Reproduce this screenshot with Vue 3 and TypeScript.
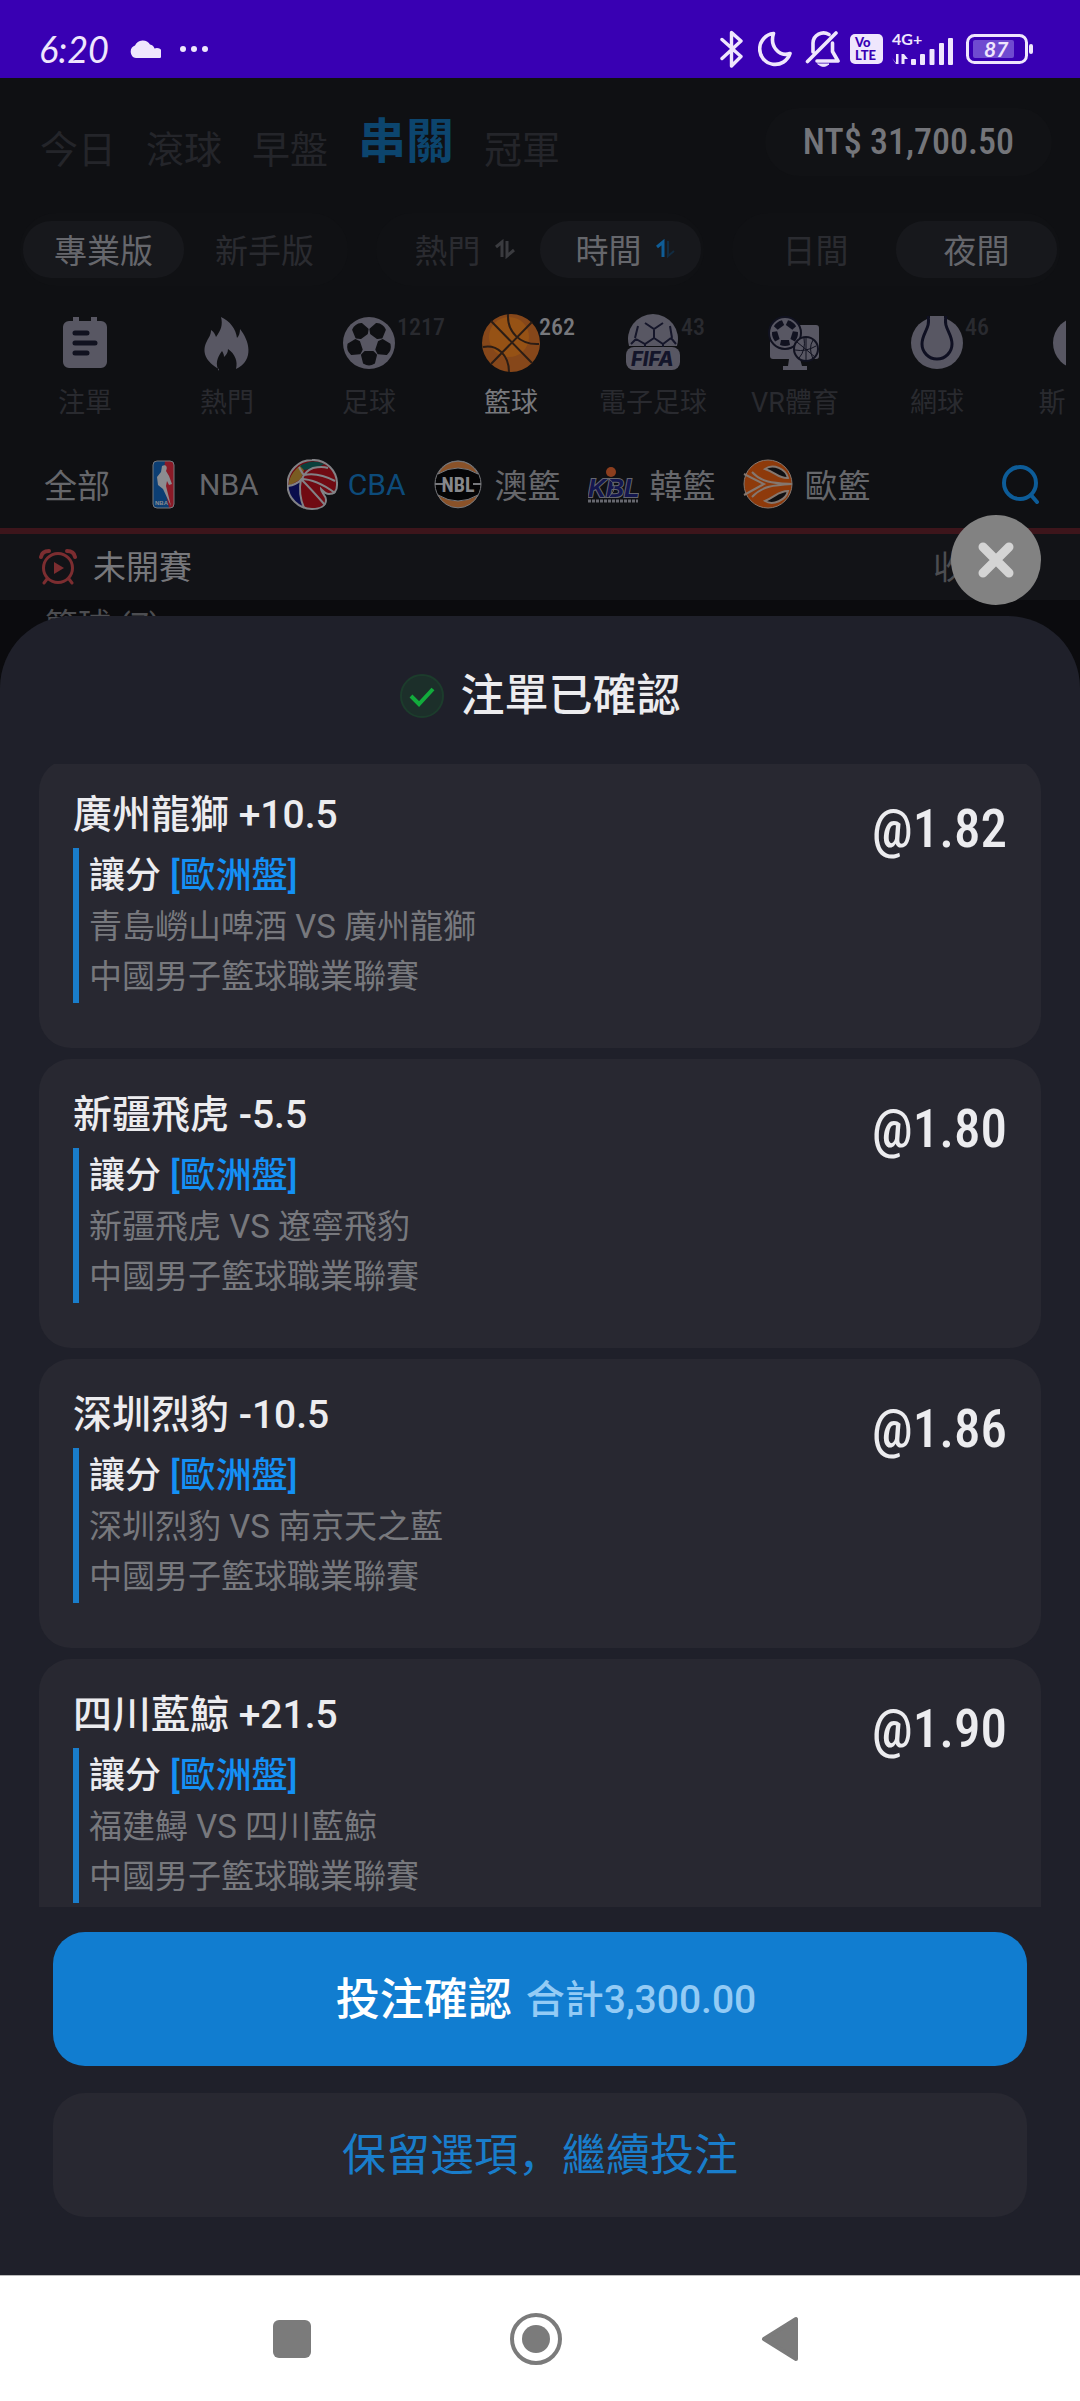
<script setup lang="ts">
import { ref } from 'vue'

interface Sport {
  id: string
  label: string
  count?: number
}

interface League {
  id: string
  label: string
  latin?: boolean
}

interface Bet {
  pick: string
  match: string
  odds: string
}

const tabs = ['今日', '滾球', '早盤', '串關', '冠軍']
const activeTab = ref('串關')

const sports: Sport[] = [
  { id: 'slip', label: '注單' },
  { id: 'hot', label: '熱門' },
  { id: 'soccer', label: '足球', count: 1217 },
  { id: 'basketball', label: '籃球', count: 262 },
  { id: 'fifa', label: '電子足球', count: 43 },
  { id: 'vr', label: 'VR體育' },
  { id: 'tennis', label: '網球', count: 46 },
  { id: 'snooker', label: '斯諾克' },
]
const activeSport = ref('basketball')

const leagues: League[] = [
  { id: 'nba', label: 'NBA', latin: true },
  { id: 'cba', label: 'CBA', latin: true },
  { id: 'nbl', label: '澳籃' },
  { id: 'kbl', label: '韓籃' },
  { id: 'euro', label: '歐籃' },
]
const activeLeague = ref('cba')

const bets: Bet[] = [
  { pick: '廣州龍獅 +10.5', match: '青島嶗山啤酒 VS 廣州龍獅', odds: '@1.82' },
  { pick: '新疆飛虎 -5.5', match: '新疆飛虎 VS 遼寧飛豹', odds: '@1.80' },
  { pick: '深圳烈豹 -10.5', match: '深圳烈豹 VS 南京天之藍', odds: '@1.86' },
  { pick: '四川藍鯨 +21.5', match: '福建鱘 VS 四川藍鯨', odds: '@1.90' },
]

const patchAngles = [0, 72, 144, 216, 288]
</script>

<template>
  <div class="app">
    <header class="status">
      <span class="clock">6:20</span>
      <svg class="cloud" width="32" height="20" viewBox="0 0 32 20"><path d="M7 19a6.500 6.500 0 0 1-1-12.500A8.500 8.500 0 0 1 21 5.500a6 6 0 0 1 4.500 4A5.500 5.500 0 0 1 31 19z" fill="#efe6fd" /></svg>
      <svg width="30" height="8" viewBox="0 0 30 8" fill="#efe6fd"><circle cx="4" cy="4" r="3" /><circle cx="15" cy="4" r="3" /><circle cx="26" cy="4" r="3" /></svg>
      <div class="status-right">
        <svg width="24" height="38" viewBox="0 0 24 38" fill="none" stroke="#efe6fd" stroke-width="3.400" stroke-linejoin="round" stroke-linecap="round"><path d="M2 9.500l19 17-9.500 9.500V2.500L21 11 2 28.500" /></svg>
        <svg class="moon" width="34" height="36" viewBox="0 0 34 36" fill="none" stroke="#efe6fd" stroke-width="3.600" stroke-linejoin="round"><path d="M15.500 2.500A15.500 15.500 0 1 0 32 22.500C21 26.500 11.500 15 15.500 2.500z" /></svg>
        <svg class="bell" width="36" height="38" viewBox="0 0 36 38" fill="none" stroke="#efe6fd" stroke-width="3.600" stroke-linecap="round" stroke-linejoin="round"><path d="M24 4.500A10.500 10.500 0 0 0 8 13v9M27.500 13v8.500L33 31H12M2.500 31.500L31 3" /><path d="M13 34h11q-5.500 5-11 0z" fill="#efe6fd" stroke-width="1" /></svg>
        <svg class="volte" width="33" height="30" viewBox="0 0 33 30"><rect width="33" height="30" rx="5" fill="#efe6fd" /><text x="5" y="13" font-family="Lato, sans-serif" font-weight="900" font-size="13" fill="#3a00b3">Vo</text><text x="5" y="26" font-family="Lato, sans-serif" font-weight="900" font-size="13" fill="#3a00b3">LTE</text></svg>
        <svg class="net" width="64" height="42" viewBox="0 -4 64 42" fill="#efe6fd">
          <text x="1" y="13" font-family="Lato, sans-serif" font-weight="700" font-size="16">4G+</text>
          <path d="M1 26l4 5V22h2.500v10H5zM10.500 22H13l4 5h-3.500v5h-3z" />
          <rect x="20" y="27" width="5" height="6" rx="1" /><rect x="29" y="22" width="5" height="11" rx="1" /><rect x="38.500" y="17" width="5" height="16" rx="1" /><rect x="48" y="11" width="5" height="22" rx="1" /><rect x="57" y="6" width="5" height="27" rx="1" />
        </svg>
        <svg class="battery" width="68" height="30" viewBox="0 0 68 30"><rect x="1.500" y="1.500" width="59" height="27" rx="7" fill="none" stroke="#efe6fd" stroke-width="3" /><rect x="7" y="6" width="41" height="18" rx="2" fill="#6f4bd0" /><rect x="63" y="10" width="4" height="10" rx="2" fill="#efe6fd" /><text x="18" y="23" font-family="Lato, sans-serif" font-style="italic" font-weight="700" font-size="21" fill="#efe6fd">87</text></svg>
      </div>
    </header>

    <div class="stage">
      <main class="sportsbook">
        <div class="top">
          <nav class="tabs">
            <a v-for="t in tabs" :key="t" href="#" :class="{ on: t === activeTab }" @click.prevent="activeTab = t">{{ t }}</a>
          </nav>
          <span class="balance">NT$ 31,700.50</span>
        </div>

        <div class="modes">
          <div class="group"><button class="on">專業版</button><button>新手版</button></div>
          <div class="group sort">
            <button>熱門<svg width="20" height="20" viewBox="0 0 20 20" fill="none" stroke="#3a3b3f" stroke-width="3"><path d="M1 8l6-5v15M12 2v15l7-6" /></svg></button>
            <button class="on">時間<svg width="20" height="20" viewBox="0 0 20 20" fill="none" stroke-width="3"><path d="M1 8l6-5v15" stroke="#0f5c96" /><path d="M12 2v15l6-5" stroke="#122b40" stroke-width="2" /></svg></button>
          </div>
          <div class="group"><button>日間</button><button class="on">夜間</button></div>
        </div>

        <nav class="sports">
          <a v-for="s in sports" :key="s.id" href="#" :class="{ on: s.id === activeSport }" @click.prevent="activeSport = s.id">
            <span class="pic">
              <svg width="60" height="60" viewBox="0 0 60 60" fill="#585763">
                <template v-if="s.id === 'slip'">
                  <path d="M14 9h4V5h6v4h12V5h6v4h4a6 6 0 0 1 6 6v35a6 6 0 0 1-6 6H14a6 6 0 0 1-6-6V15a6 6 0 0 1 6-6z" />
                  <path d="M20 21h12M20 31h20M20 41h12" stroke="#111220" stroke-width="5" stroke-linecap="round" />
                </template>
                <path v-else-if="s.id === 'hot'" d="M22 57C9 50 4 40 10 29c2-4 4-6 4-11 3 2 4 4 5 7 5-7 7-12 5-20 9 4 15 12 16 21 2-2 3-5 3-9 9 11 15 31-4 40 2-8-1-15-8-20 0 4-2 6-4 8 0-3-1-4-2-6-5 7-7 13-3 20z" />
                <template v-else-if="s.id === 'soccer'">
                  <circle cx="30" cy="31" r="26" />
                  <path v-for="a in patchAngles" :key="a" d="M23 43l3-3h8l3 3-2 8q-5 3-10 0z" fill="#0f1013" stroke="#0f1013" stroke-width="2" stroke-linejoin="round" :transform="`rotate(${a} 30 31)`" />
                </template>
                <template v-else-if="s.id === 'basketball'">
                  <circle cx="30" cy="31" r="29" fill="#86471a" />
                  <circle cx="28" cy="25" r="20" fill="#965215" />
                  <path d="M10 9l41 42M10 52L51 10M27 2c-1 18 12 31 31 30M2 35c14-3 26 8 26 25" fill="none" stroke="#2c1d15" stroke-width="2" />
                </template>
                <template v-else-if="s.id === 'fifa'">
                  <path d="M6 34a25 25 0 1 1 48 0z" />
                  <path d="M22 11l9 6 9-6M31 17v9l-9 6-9-5M31 26l9 6 8-6M22 32v4M40 32v4M13 27l-5 5M48 26l5 6M15 14l-3 12M47 14l2 12" fill="none" stroke="#15162a" stroke-width="2" />
                  <rect x="3" y="35" width="54" height="23" rx="8" />
                  <text x="8" y="54" font-family="Inter, sans-serif" font-weight="800" font-style="italic" font-size="20" fill="#14152a">FIFA</text>
                </template>
                <template v-else-if="s.id === 'vr'">
                  <rect x="5" y="13" width="49" height="34" rx="3" />
                  <path d="M24 47h11l2 7h5v4H18v-4h5z" />
                  <circle cx="20" cy="21" r="16" stroke="#111220" stroke-width="2" />
                  <path v-for="a in patchAngles" :key="a" d="M16 28h8l1 5q-5 2-10 0z" fill="#111220" :transform="`rotate(${a} 20 21)`" />
                  <circle cx="41" cy="37" r="12" stroke="#111220" stroke-width="2" />
                  <path d="M32 30l18 15M41 26v23M30 38q11 2 21-4M34 46q7-8 5-20M48 28q-5 8 0 19" fill="none" stroke="#111220" stroke-width="1" />
                </template>
                <template v-else-if="s.id === 'tennis'">
                  <circle cx="30" cy="31" r="26" />
                  <path d="M21 4c3 12-6 17-6 28a15 15 0 0 0 30 0c0-11-9-16-6-28" fill="none" stroke="#0f1022" stroke-width="3" />
                  <path d="M23 4h14v8H23z" fill="#585763" />
                </template>
                <circle v-else cx="30" cy="31" r="26" />
              </svg>
              <span v-if="s.count" class="count">{{ s.count }}</span>
            </span>
            <span class="name">{{ s.label }}</span>
          </a>
        </nav>

        <nav class="leagues">
          <a href="#">全部</a>
          <a v-for="l in leagues" :key="l.id" href="#" :class="{ on: l.id === activeLeague, latin: l.latin }" @click.prevent="activeLeague = l.id">
            <svg width="51" height="51" viewBox="0 0 51 51">
              <template v-if="l.id === 'nba'">
                <rect x="15" y="2" width="21" height="47" rx="4" fill="#0c3e73" />
                <path d="M27 2h5a4 4 0 0 1 4 4v39a4 4 0 0 1-4 4h-1L25 20z" fill="#8b1a27" />
                <path d="M24 7c4-2 6 1 4 5l3 5 3 8-3 1-2-4-1 5 5 20-8-17-5-4-1-8 4-5z" fill="#8c8c90" />
                <rect x="15" y="2" width="21" height="47" rx="4" fill="none" stroke="#77787d" stroke-width="1" />
                <text x="17" y="46" font-family="Liberation Sans, sans-serif" font-weight="700" font-size="6" fill="#8c8c90">NBA</text>
              </template>
              <template v-else-if="l.id === 'cba'">
                <path d="M25 1a24 24 0 0 1 25 25c0 6-3 9-8 9-4 0-6-3-8-5 0 4 5 6 5 11 0 6-6 9-14 9A24.500 24.500 0 0 1 25 1z" fill="#700a12" />
                <path d="M2 22Q5 12 14 6l3 5-3 9-12 7z" fill="#795c22" />
                <path d="M13 7q12-8 25-2l-9 4-12 2z" fill="#0b403c" />
                <path d="M1 27l13-5q-2 14 2 26Q1 41 1 27z" fill="#0a0d4c" />
                <path d="M1 27q8-1 14-7 3-8 11-11 9-2 15 0M14 20q15 0 34 14M14 20q10 10 24 26M14 20q-3 15 3 29M12 8q3 6 5 8 14-3 31 6" fill="none" stroke="#828286" stroke-width="2" />
                <path d="M25 1a24 24 0 0 1 25 25c0 6-3 9-8 9-4 0-6-3-8-5 0 4 5 6 5 11 0 6-6 9-14 9A24.500 24.500 0 0 1 25 1z" fill="none" stroke="#828286" stroke-width="2" />
              </template>
              <template v-else-if="l.id === 'nbl'">
                <circle cx="25" cy="25" r="23" fill="#050506" stroke="#77787c" stroke-width="1" />
                <path d="M5 15a22 22 0 0 1 40 0Q25 3 5 15zM5 36a22 22 0 0 0 40 0Q25 48 5 36z" fill="#8a5229" stroke="#77787c" />
                <path d="M2 25h8M40 25h8" stroke="#77787c" stroke-width="2" />
                <text x="25" y="33" text-anchor="middle" font-family="Roboto Condensed, Liberation Sans, sans-serif" font-weight="700" font-size="20" fill="#87888b">NBL</text>
              </template>
              <template v-else-if="l.id === 'kbl'">
                <text x="0" y="38" font-family="Liberation Sans, sans-serif" font-weight="700" font-style="italic" font-size="25" fill="#13164e" stroke="#66676e" stroke-width="2" paint-order="stroke">KBL</text>
                <circle cx="23" cy="13" r="5" fill="#8c3e1e" />
                <path d="M20 19q12 8 1 19" fill="none" stroke="#66676e" stroke-width="1" />
                <path d="M0 42h50" stroke="#66676e" stroke-width="3" stroke-dasharray="3 1" />
              </template>
              <template v-else>
                <circle cx="25" cy="25" r="24" fill="#8e3a0b" stroke="#85776f" stroke-width="1" />
                <path d="M1 15l20 10-20 11M9 13c10 11 22 11 40 12C31 26 19 27 9 38" fill="none" stroke="#85776f" stroke-width="2" />
                <path d="M22 10c8-6 21 0 23 9-9 1-11-5-23-9zM22 42c8 5 21-1 23-10-9 0-12 5-23 10z" fill="#0f1013" stroke="#85776f" stroke-width="2" />
              </template>
            </svg>
            {{ l.label }}
          </a>
          <button class="search" aria-label="搜尋">
            <svg width="40" height="40" viewBox="0 0 40 40" fill="none" stroke="#0d5c98" stroke-width="4" stroke-linecap="round"><circle cx="19" cy="19" r="16" /><path d="M30 31l6 7" /></svg>
          </button>
        </nav>

        <div class="section">
          <svg width="38" height="36" viewBox="0 0 38 36" fill="none" stroke="#7c2d30" stroke-width="3" stroke-linecap="round"><circle cx="19" cy="19" r="14.500" /><path d="M2 8q1-6 8-6M36 8q-1-6-8-6" stroke-width="4" /><path d="M8 30l-3 4M30 30l3 4" /><path d="M15 13l10 6-10 6z" fill="#7c2d30" stroke="none" /></svg>
          <span>未開賽</span>
          <button class="fold">收合</button>
        </div>
        <div class="group-title">籃球 (7)</div>
      </main>

      <section class="overlay" role="dialog" aria-labelledby="slip-title">
        <div class="sheet">
          <button class="close" aria-label="關閉">
            <svg width="40" height="40" viewBox="0 0 40 40" stroke="#d4d4d4" stroke-width="9" stroke-linecap="round"><path d="M7 7l26 26M33 7L7 33" /></svg>
          </button>
          <h1 id="slip-title">
            <svg width="44" height="44" viewBox="0 0 44 44" fill="none"><circle cx="22" cy="22" r="21" fill="#1c2f2a" stroke="#1c3c2c" stroke-width="2" /><path d="M11 22l8 8 14-15" stroke="#12ab3c" stroke-width="4" /></svg>
            <span>注單已確認</span>
          </h1>
          <div class="scroll">
            <ul class="bets">
              <li v-for="b in bets" :key="b.match" class="bet">
                <div class="info">
                  <h2>{{ b.pick }}</h2>
                  <div class="detail">
                    <p class="market">讓分 <span>[歐洲盤]</span></p>
                    <p>{{ b.match }}</p>
                    <p>中國男子籃球職業聯賽</p>
                  </div>
                </div>
                <strong class="odds">{{ b.odds }}</strong>
              </li>
            </ul>
          </div>
          <div class="actions">
            <button class="confirm">投注確認<span>合計3,300.00</span></button>
            <button class="keep">保留選項，繼續投注</button>
          </div>
        </div>
      </section>
    </div>

    <footer class="navbar">
      <button aria-label="最近"><svg width="52" height="52" viewBox="0 0 52 52"><rect x="7" y="7" width="38" height="38" rx="6" fill="#7b7b7b" /></svg></button>
      <button aria-label="首頁"><svg width="52" height="52" viewBox="0 0 52 52"><circle cx="26" cy="26" r="24" fill="none" stroke="#7b7b7b" stroke-width="4" /><circle cx="26" cy="26" r="14" fill="#7b7b7b" /></svg></button>
      <button aria-label="返回"><svg width="52" height="52" viewBox="0 0 52 52"><path d="M10 26L42 6v40z" fill="#7b7b7b" stroke="#7b7b7b" stroke-width="4" stroke-linejoin="round" /></svg></button>
    </footer>
  </div>
</template>

<style>
body {
  margin: 0;
  background: #1f202a;
}
</style>

<style scoped>
.app {
  display: flex;
  flex-direction: column;
  height: 100vh;
  overflow: hidden;
  background: #0b0b0e;
  font-family: Roboto, 'Noto Sans CJK SC', sans-serif;
}
.app * {
  box-sizing: border-box;
}
svg {
  display: block;
  flex: none;
}
a {
  color: inherit;
  text-decoration: none;
}
button {
  margin: 0;
  padding: 0;
  border: 0;
  background: none;
  color: inherit;
  font: inherit;
  cursor: pointer;
}

.status {
  display: flex;
  align-items: center;
  flex: none;
  height: 78px;
  padding: 20px 46px 0 39px;
  background: #3900b3;
  color: #efe6fd;
}
.clock {
  width: 90px;
  font: italic 36px/40px Lato, sans-serif;
}
.cloud {
  margin-right: 18px;
}
.status-right {
  display: flex;
  align-items: center;
  margin-left: auto;
}
.moon {
  margin-left: 14px;
}
.bell {
  margin-left: 13px;
}
.volte {
  margin-left: 9px;
}
.net {
  margin-left: 8px;
}
.battery {
  margin-left: 11px;
}

.stage {
  display: grid;
  flex: 1;
  min-height: 0;
  grid-template: minmax(0, 1fr) / minmax(0, 1fr);
}
.sportsbook,
.overlay {
  grid-area: 1 / 1;
  min-height: 0;
}
.sportsbook {
  overflow: hidden;
  background: linear-gradient(#0f1013 522px, #0b0b0e 522px);
}

.top {
  display: flex;
  align-items: center;
  justify-content: space-between;
  height: 135px;
  padding: 0 28px 8px 40px;
}
.tabs {
  display: flex;
  align-items: flex-end;
  gap: 30px;
  color: #24252a;
  font-size: 38px;
  line-height: 46px;
}
.tabs .on {
  color: #0c456e;
  font-size: 48px;
  font-weight: 700;
  line-height: 62px;
}
.balance {
  padding: 0 38px;
  border-radius: 34px;
  background: #111215;
  color: #74757a;
  font: 500 36px/68px 'Roboto Condensed', 'Liberation Sans Narrow', 'Liberation Sans', sans-serif;
}

.modes {
  display: flex;
  gap: 28px;
  padding: 0 20px;
  color: #2a2b30;
  font-size: 33px;
}
.group {
  display: flex;
  flex: 1;
  padding: 8px 3px;
  border-radius: 36px;
  background: #101114;
}
.group button {
  display: flex;
  flex: 1;
  align-items: center;
  justify-content: center;
  gap: 14px;
  height: 57px;
  padding-bottom: 2px;
  border-radius: 28px;
}
.sort button {
  padding-left: 10px;
}
.group .on {
  background: #17181c;
  color: #66676c;
}

.sports {
  display: flex;
  margin: 26px 14px 0;
  overflow: hidden;
  color: #292a2f;
  font-size: 27px;
  line-height: 30px;
}
.sports a {
  display: flex;
  flex: 0 0 142px;
  flex-direction: column;
  align-items: center;
  gap: 16px;
}
.pic {
  position: relative;
}
.count {
  position: absolute;
  top: 0;
  left: 58px;
  font: 500 24px/30px 'Roboto Condensed', 'Liberation Sans Narrow', 'Liberation Sans', sans-serif;
}
.sports .on {
  color: #77787c;
}

.leagues {
  display: flex;
  align-items: center;
  gap: 28px;
  height: 88px;
  margin-top: 22px;
  padding: 0 39px 0 44px;
  color: #66676b;
  font-size: 33px;
}
.leagues a {
  display: flex;
  align-items: center;
  gap: 10px;
}
.leagues .latin {
  font-size: 30px;
}
.leagues .on {
  color: #0d4b7a;
}
.search {
  margin-left: auto;
}

.section {
  display: flex;
  align-items: center;
  height: 72px;
  padding: 0 81px 0 39px;
  border-top: 6px solid #3d151b;
  background: #121317;
  color: #77787c;
  font-size: 33px;
}
.section span {
  margin-left: 16px;
  padding-bottom: 4px;
}
.fold {
  margin-left: auto;
  padding-bottom: 4px;
  color: #4c4d51;
}
.group-title {
  padding: 4px 45px;
  color: #4c4d51;
  font-size: 33px;
  line-height: 44px;
}

.overlay {
  display: flex;
  flex-direction: column;
  z-index: 1;
  padding-top: 538px;
}
.sheet {
  position: relative;
  display: flex;
  flex: 1;
  flex-direction: column;
  min-height: 0;
  border-radius: 72px 72px 0 0;
  background: #1f202a;
}
.close {
  position: absolute;
  top: -101px;
  right: 39px;
  display: grid;
  place-items: center;
  width: 90px;
  height: 90px;
  border-radius: 50%;
  background: #828282;
}
h1 {
  display: flex;
  align-items: center;
  justify-content: center;
  gap: 17px;
  height: 148px;
  margin: 0;
  padding-top: 12px;
  color: #ececef;
  font-size: 44px;
  font-weight: 500;
}
h1 span {
  padding-bottom: 8px;
}
.scroll {
  flex: 1;
  min-height: 0;
  margin: 0 39px;
  overflow: hidden auto;
  scrollbar-width: none;
}
.bets {
  display: flex;
  flex-direction: column;
  gap: 11px;
  margin: -5px 0 0;
  padding: 0;
  list-style: none;
}
.bet {
  display: flex;
  justify-content: space-between;
  padding: 30px 34px 45px;
  border-radius: 32px;
  background: #282831;
  color: #ececef;
}
h2 {
  margin: 0 0 7px;
  font-size: 39px;
  font-weight: 500;
  line-height: 52px;
}
.detail {
  padding: 2px 0 1px 10px;
  border-left: 6px solid #197dcb;
  color: #77787d;
  font-size: 33px;
  line-height: 50px;
}
.detail p {
  margin: 0;
}
.detail .market {
  color: #ececef;
  font-size: 36px;
  font-weight: 500;
  line-height: 52px;
}
.market span {
  color: #1490f5;
}
.odds {
  margin-top: 10px;
  font: 500 53px/60px 'Roboto Condensed', 'Liberation Sans Narrow', 'Liberation Sans', sans-serif;
}
.actions {
  display: flex;
  flex-direction: column;
  gap: 27px;
  padding: 25px 53px 58px;
}
.confirm,
.keep {
  padding-bottom: 6px;
  border-radius: 32px;
  font-size: 44px;
}
.confirm {
  display: flex;
  align-items: center;
  justify-content: center;
  gap: 14px;
  height: 134px;
  padding-left: 12px;
  background: #117dd0;
  color: #fff;
  font-weight: 500;
}
.confirm span {
  color: #93cbf5;
  font-size: 39px;
}
.keep {
  height: 124px;
  background: #282831;
  color: #197dcb;
}

.navbar {
  display: flex;
  flex: none;
  align-items: center;
  justify-content: center;
  gap: 192px;
  height: 126px;
  padding-right: 8px;
  border-top: 1px solid #bbb;
  background: #fff;
}
</style>
